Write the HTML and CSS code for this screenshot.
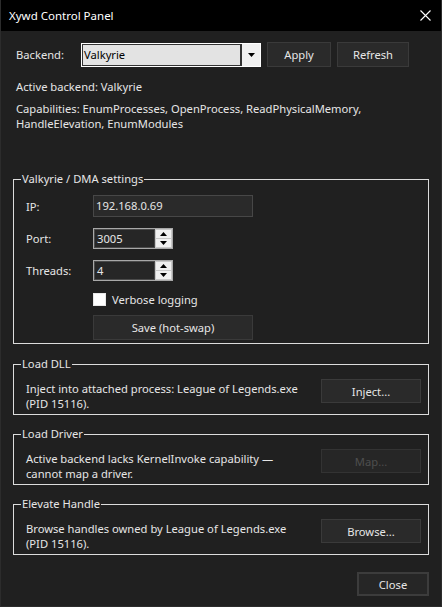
FILE: index.html
```html
<!DOCTYPE html>
<html>
<head>
<meta charset="utf-8">
<link rel="stylesheet" href="styles.css">
</head>
<body>
<div class="window">
  <div class="titlebar">
    <span class="title">Xywd Control Panel</span>
    <svg class="close-x" width="11" height="11" viewBox="0 0 11 11"><path d="M0.5 0.5L10.5 10.5M10.5 0.5L0.5 10.5" stroke="#ffffff" stroke-width="1.1" fill="none"/></svg>
  </div>
  <div class="content">
    <div class="backend-row">
      <span class="backend-lbl">Backend:</span>
      <div class="combo">
        <div class="combo-field">Valkyrie</div>
        <div class="combo-btn"><svg width="7" height="4" viewBox="0 0 7 4"><path d="M0 0H7L3.5 4Z" fill="#000"/></svg></div>
      </div>
      <button class="btn apply">Apply</button>
      <button class="btn refresh">Refresh</button>
    </div>
    <p class="info active">Active backend: Valkyrie</p>
    <p class="info caps">Capabilities: EnumProcesses, OpenProcess, ReadPhysicalMemory,<br>HandleElevation, EnumModules</p>

    <fieldset class="group dma">
      <legend>Valkyrie / DMA settings</legend>
      <div class="dma-body">
        <div class="frow ip-row">
          <span class="flbl">IP:</span>
          <div class="textbox">192.168.0.69</div>
        </div>
        <div class="frow spin-row">
          <span class="flbl">Port:</span>
          <div class="spin">
            <div class="spin-field">3005</div>
            <div class="spin-btns">
              <div class="spin-b"><svg width="7" height="4" viewBox="0 0 7 4"><path d="M0 4H7L3.5 0Z" fill="#000"/></svg></div>
              <div class="spin-b"><svg width="7" height="4" viewBox="0 0 7 4"><path d="M0 0H7L3.5 4Z" fill="#000"/></svg></div>
            </div>
          </div>
        </div>
        <div class="frow spin-row">
          <span class="flbl">Threads:</span>
          <div class="spin">
            <div class="spin-field">4</div>
            <div class="spin-btns">
              <div class="spin-b"><svg width="7" height="4" viewBox="0 0 7 4"><path d="M0 4H7L3.5 0Z" fill="#000"/></svg></div>
              <div class="spin-b"><svg width="7" height="4" viewBox="0 0 7 4"><path d="M0 0H7L3.5 4Z" fill="#000"/></svg></div>
            </div>
          </div>
        </div>
        <div class="frow check-row">
          <span class="flbl"></span>
          <span class="checkbox"></span>
          <span class="check-lbl">Verbose logging</span>
        </div>
        <div class="frow save-row">
          <span class="flbl"></span>
          <button class="btn save">Save (hot-swap)</button>
        </div>
      </div>
    </fieldset>

    <fieldset class="group action dll">
      <legend>Load DLL</legend>
      <div class="action-body">
        <p class="action-text">Inject into attached process: League of Legends.exe<br>(PID 15116).</p>
        <button class="btn action-btn">Inject...</button>
      </div>
    </fieldset>

    <fieldset class="group action">
      <legend>Load Driver</legend>
      <div class="action-body">
        <p class="action-text">Active backend lacks KernelInvoke capability —<br>cannot map a driver.</p>
        <button class="btn action-btn disabled">Map...</button>
      </div>
    </fieldset>

    <fieldset class="group action">
      <legend>Elevate Handle</legend>
      <div class="action-body">
        <p class="action-text">Browse handles owned by League of Legends.exe<br>(PID 15116).</p>
        <button class="btn action-btn">Browse...</button>
      </div>
    </fieldset>

    <div class="footer">
      <button class="btn close">Close</button>
    </div>
  </div>
</div>
</body>
</html>
```

FILE: styles.css
```css
* { box-sizing: border-box; }
html, body { margin: 0; padding: 0; background: #202020; }
body {
  font-family: "Noto Sans", "Open Sans", sans-serif;
  font-size: 11.2px;
  color: #e6e6e6;
}
.window {
  width: 442px;
  height: 607px;
  background: #202020;
  border: 1px solid #2c2c2c;
  border-top: none;
  display: flex;
  flex-direction: column;
}
.titlebar {
  height: 31px;
  background: #000;
  display: flex;
  align-items: center;
  justify-content: space-between;
  padding: 0 10px 0 8px;
  flex-shrink: 0;
}
.title { color: #fff; font-size: 11.5px; }
.close-x { display: block; }
.content {
  padding: 0 12px 0 12px;
  display: flex;
  flex-direction: column;
}
.backend-row {
  margin-top: 11px;
  height: 25px;
  display: flex;
  align-items: center;
}
.backend-lbl { width: 68px; padding-left: 3px; }
.combo {
  width: 180px;
  height: 24px;
  border: 1px solid #ffffff;
  display: flex;
  background: #f0f0f0;
}
.combo-field {
  flex: 1;
  background: #e3e3e3;
  border: 1px solid #333;
  border-right-width: 2px;
  color: #000;
  padding-left: 1px;
  line-height: 20px;
}
.combo-btn {
  width: 18px;
  display: flex;
  align-items: center;
  justify-content: center;
}
.combo-btn svg { display: block; }
.btn {
  font-family: inherit;
  font-size: 11.2px;
  color: #e6e6e6;
  background: #2a2a2a;
  border: 1px solid #3a3a3a;
  padding: 0;
  margin: 0;
  height: 25px;
}
.apply { width: 64px; margin-left: 6px; }
.refresh { width: 72px; margin-left: 6px; }
.info { margin: 0; padding-left: 3px; line-height: 15px; }
.active { margin-top: 12px; }
.caps { margin-top: 7px; }

.group {
  margin: 0;
  border: 1px solid #dcdcdc;
  padding: 0 7px 3px 7px;
  min-width: 0;
}
.group legend {
  padding: 0 1px;
  line-height: 16px;
  color: #e6e6e6;
}
.dma { margin-top: 40px; }
.dma-body { padding: 8px 0 0 5px; }
.frow { display: flex; align-items: center; }
.flbl { width: 67px; flex-shrink: 0; }
.ip-row { height: 22px; }
.textbox {
  width: 160px;
  height: 22px;
  background: #2a2a2a;
  border: 1px solid #474747;
  padding-left: 2px;
  line-height: 19px;
}
.spin-row { height: 21px; margin-top: 11px; }
.spin {
  width: 80px;
  height: 21px;
  border: 1px solid #a8a8a8;
  display: flex;
}
.spin-field {
  flex: 1;
  background: #262626;
  border: 1px solid #4a4a4a;
  padding-left: 2px;
  line-height: 17px;
}
.spin-btns {
  width: 17px;
  display: flex;
  flex-direction: column;
  padding: 1px;
  gap: 1px;
  background: #c8c8c8;
}
.spin-b {
  flex: 1;
  background: #f0f0f0;
  display: flex;
  align-items: center;
  justify-content: center;
}
.spin-b svg { display: block; }
.check-row { height: 13px; margin-top: 12px; }
.checkbox {
  width: 13px;
  height: 13px;
  background: #fff;
  border: 1px solid #e8e8e8;
}
.check-lbl { margin-left: 6px; }
.save-row { margin-top: 9px; }
.save { width: 160px; }

.action { margin-top: 11px; }
.action.dll { margin-top: 12px; }
.action-body {
  padding: 7px 0 0 5px;
  display: flex;
  justify-content: space-between;
  align-items: flex-start;
}
.action-text { margin: 2px 0 0 0; line-height: 15px; }
.action-btn { width: 100px; height: 24px; }
.disabled { color: #4e4e4e; background: #262626; border-color: #333; }

.footer {
  margin-top: 17px;
  display: flex;
  justify-content: flex-end;
}
.close {
  width: 72px;
  height: 24px;
  border: 2px solid #3c3c3c;
  background: #262626;
}
```
